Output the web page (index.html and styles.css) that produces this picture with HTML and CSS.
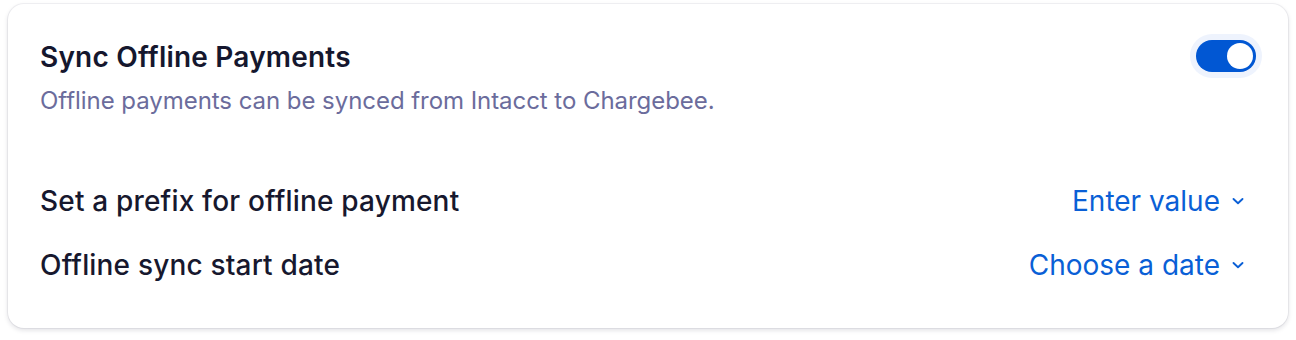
FILE: index.html
```html
<!DOCTYPE html>
<html lang="en">
<head>
<meta charset="utf-8">
<title>Sync Offline Payments</title>
<link rel="stylesheet" href="styles.css">
</head>
<body>
<div class="page">
  <section class="card">
    <div class="header">
      <div class="header-text">
        <h2 class="title">Sync Offline Payments</h2>
        <p class="subtitle">Offline payments can be synced from Intacct to Chargebee.</p>
      </div>
      <button class="toggle on" aria-pressed="true" aria-label="Sync Offline Payments"><span class="knob"></span></button>
    </div>
    <div class="rows">
      <div class="row">
        <span class="label">Set a prefix for offline payment</span>
        <button class="value">Enter value
          <svg class="chev" viewBox="0 0 16 16" width="16" height="16" aria-hidden="true"><path d="M3.5 6 L8 10.2 L12.5 6" fill="none" stroke="currentColor" stroke-width="1.9" stroke-linecap="round" stroke-linejoin="round"/></svg>
        </button>
      </div>
      <div class="row">
        <span class="label">Offline sync start date</span>
        <button class="value">Choose a date
          <svg class="chev" viewBox="0 0 16 16" width="16" height="16" aria-hidden="true"><path d="M3.5 6 L8 10.2 L12.5 6" fill="none" stroke="currentColor" stroke-width="1.9" stroke-linecap="round" stroke-linejoin="round"/></svg>
        </button>
      </div>
    </div>
  </section>
</div>
</body>
</html>
```
FILE: styles.css
```css
* { box-sizing: border-box; }
html, body { margin: 0; background: #ffffff; }
body { font-family: Inter, "Noto Sans", "Liberation Sans", sans-serif; }
.page { padding: 4px 8px 12px 8px; }
.card {
  background: #fff;
  border-radius: 16px;
  box-shadow: 0 0 0 1px rgba(20, 20, 50, 0.05), 0 2px 5px rgba(20, 20, 50, 0.14);
  padding: 35px 32px 31px 32px;
  height: 324px;
}
.header { display: flex; justify-content: space-between; align-items: flex-start; }
.title {
  margin: 0;
  font-size: 28px;
  line-height: 36px;
  font-weight: 600;
  letter-spacing: 0.2px;
  color: #15172e;
}
.subtitle {
  margin: 10px 0 0 0;
  font-size: 24px;
  line-height: 32px;
  letter-spacing: -0.05px;
  color: #6b6c9c;
}
.toggle {
  width: 60px; height: 32px;
  border: 0; padding: 0;
  border-radius: 16px;
  background: #0157d3;
  box-shadow: 0 0 0 6px #eef3fd;
  position: relative;
  margin-top: 1px;
}
.knob {
  position: absolute;
  top: 3px; right: 3px;
  width: 26px; height: 26px;
  border-radius: 50%;
  background: #fff;
}
.rows { margin-top: 52px; }
.row {
  display: flex; justify-content: space-between; align-items: center;
  height: 64px;
}
.label { font-size: 28px; font-weight: 500; letter-spacing: 0.18px; color: #17182e; }
.value {
  display: flex; align-items: center; gap: 10px;
  border: 0; background: none; padding: 0; margin-right: 10px;
  font-family: inherit; font-size: 28px; color: #0a5fd6;
}
.chev { display: block; }
```
